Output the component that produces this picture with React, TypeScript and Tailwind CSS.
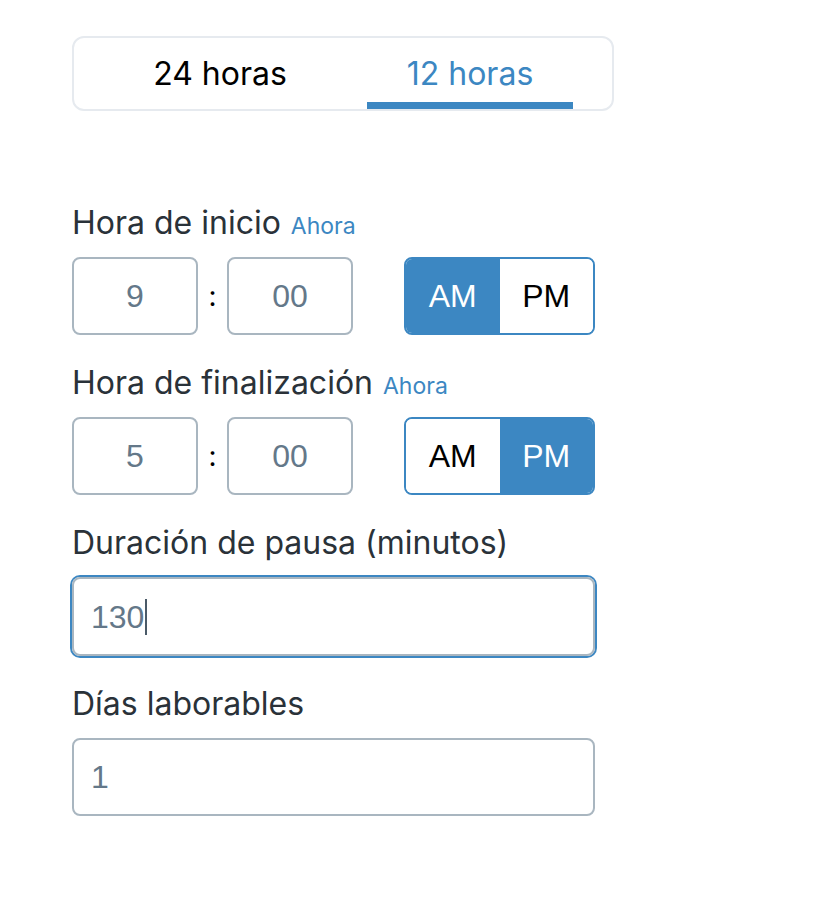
import React from "react";

const inter = "font-['Inter','Noto_Sans',sans-serif]";
const arial = "font-['Liberation_Sans',Arial,sans-serif]";

function Label({ text, now }: { text: string; now?: boolean }) {
  return (
    <div className={`mt-6 mb-[10px] h-12 leading-[48px] text-[32px] text-[#2a3239] ${inter}`}>
      {text}
      {now && <span className="ml-[10px] text-[23px] text-[#3c87c2]">Ahora</span>}
    </div>
  );
}

function TimeRow({ hour, pm }: { hour: string; pm: boolean }) {
  const field =
    "w-[126px] h-[78px] rounded-lg border-2 border-[#a9b6c0] bg-white text-center text-[32px] text-[#647889] outline-none " +
    arial;
  return (
    <div className="flex items-center">
      <input className={field} readOnly value={hour} />
      <span className={`w-[29px] text-center text-[28px] text-black ${inter}`}>:</span>
      <input className={field} readOnly value="00" />
      <div className={`ml-[51px] flex h-[78px] w-[191px] overflow-hidden rounded-lg border-2 border-[#3c87c2] text-[32px] ${arial}`}>
        <button className={`flex-1 ${pm ? "bg-white text-black" : "bg-[#3c87c2] text-white"}`}>AM</button>
        <button className={`flex-1 ${pm ? "bg-[#3c87c2] text-white" : "bg-white text-black"}`}>PM</button>
      </div>
    </div>
  );
}

export default function App() {
  return (
    <div className="min-h-screen bg-white pl-[72px] pt-[36px]">
      <div className={`flex h-[75px] w-[542px] gap-[44px] rounded-xl border-2 border-[#e6eaef] pl-[43px] text-[32px] ${inter}`}>
        <button className="relative flex w-[206px] shrink-0 items-center justify-center text-black">24 horas</button>
        <button className="relative flex w-[206px] shrink-0 items-center justify-center text-[#3c87c2]">
          12 horas
          <span className="absolute bottom-0 left-0 right-0 h-[7px] bg-[#3c87c2]" />
        </button>
      </div>

      <div className="mt-[64px] flex w-[523px] flex-col">
        <Label text="Hora de inicio" now />
        <TimeRow hour="9" pm={false} />

        <Label text="Hora de finalización" now />
        <TimeRow hour="5" pm={true} />

        <Label text="Duración de pausa (minutos)" />
        <div
          className={`flex h-[79px] items-center rounded-lg border-2 border-[#a9b6c0] px-[17px] text-[32px] text-[#647889] ring-2 ring-[#3c87c2] ${arial}`}
        >
          130
          <span className="ml-px h-[36px] w-[2px] bg-[#4a5a68]" />
        </div>

        <Label text="Días laborables" />
        <input
          className={`h-[78px] w-full rounded-lg border-2 border-[#a9b6c0] px-[17px] text-[32px] text-[#647889] outline-none ${arial}`}
          readOnly
          value="1"
        />
      </div>
    </div>
  );
}
